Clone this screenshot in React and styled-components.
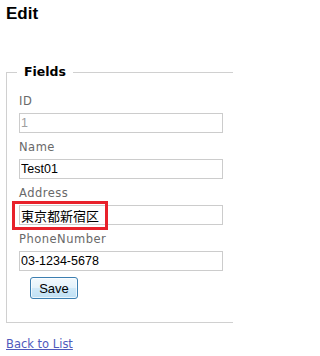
import React from "react";
import styled, { createGlobalStyle } from "styled-components";

const GlobalStyle = createGlobalStyle`
  html, body { margin: 0; background: #fff; overflow: hidden; }
  body {
    font-family: "DejaVu Sans", Verdana, sans-serif;
    color: #696969;
  }
`;

const Page = styled.div`
  padding: 4px 0 0 6px;
  width: 233px;
  box-sizing: border-box;
  overflow: hidden;
`;

const Title = styled.h2`
  margin: 0;
  font: bold 17px/20px "Liberation Sans", Arial, sans-serif;
  color: #000;
`;

const Fieldset = styled.fieldset`
  margin: 40px 0 0 0;
  width: 240px;
  box-sizing: border-box;
  border: 1px solid #d0d0d0;
  padding: 12px 10px 23px 10px;
  min-width: 0;
`;

const Legend = styled.legend`
  padding: 0 7px;
  font-size: 12.5px;
  line-height: 16px;
  font-weight: bold;
  color: #000;
`;

const Fields = styled.div`
  padding-left: 2px;
  display: flex;
  flex-direction: column;
  gap: 5px;
`;

const Field = styled.div`
  display: flex;
  flex-direction: column;
`;

const Label = styled.label`
  font-size: 11.5px;
  line-height: 18px;
  letter-spacing: 0.5px;
`;

const InputWrap = styled.div`
  position: relative;
  margin-top: 3px;
  width: 204px;
`;

const Input = styled.input`
  display: block;
  width: 204px;
  height: 20px;
  box-sizing: border-box;
  margin: 0;
  border: 1px solid #cccccc;
  padding: 0 1px;
  font: 12.5px "Liberation Sans", Arial, "Noto Sans CJK JP", sans-serif;
  color: ${(p) => (p.readOnly ? "#a0a0a0" : "#000")};
  background: #fff;
  outline: none;
  ${(p) => p.$cjk && `font: 13px "Noto Sans CJK JP", sans-serif;`}
`;

const Highlight = styled.span`
  position: absolute;
  left: -7px;
  top: -4px;
  width: 96px;
  height: 29px;
  box-sizing: border-box;
  border: 3px solid #e8212b;
  pointer-events: none;
`;

const Actions = styled.div`
  margin-top: 1px;
  padding-left: 11px;
`;

const Button = styled.button`
  width: 48px;
  height: 22px;
  box-sizing: border-box;
  border: 1px solid #3c7fb1;
  border-radius: 3px;
  padding: 0;
  background: linear-gradient(#f2f9fd, #e3f2fb 50%, #d0e9f8 50%, #bfe0f4);
  box-shadow: inset 0 0 0 1px rgba(255, 255, 255, 0.7);
  font: 13px "Liberation Sans", Arial, sans-serif;
  color: #000;
`;

const BackLink = styled.a`
  display: inline-block;
  margin-top: 12px;
  font-size: 11.5px;
  line-height: 18px;
  color: #505abc;
  text-decoration: underline;
`;

const fields = [
  { label: "ID", value: "1", readOnly: true },
  { label: "Name", value: "Test01" },
  { label: "Address", value: "東京都新宿区", cjk: true, marked: true },
  { label: "PhoneNumber", value: "03-1234-5678" },
];

export default function App() {
  return (
    <Page>
      <GlobalStyle />
      <Title>Edit</Title>
      <Fieldset>
        <Legend>Fields</Legend>
        <Fields>
          {fields.map((f) => (
            <Field key={f.label}>
              <Label>{f.label}</Label>
              <InputWrap>
                <Input defaultValue={f.value} readOnly={f.readOnly} $cjk={f.cjk} />
                {f.marked && <Highlight />}
              </InputWrap>
            </Field>
          ))}
          <Actions>
            <Button type="button">Save</Button>
          </Actions>
        </Fields>
      </Fieldset>
      <BackLink href="#">Back to List</BackLink>
    </Page>
  );
}
